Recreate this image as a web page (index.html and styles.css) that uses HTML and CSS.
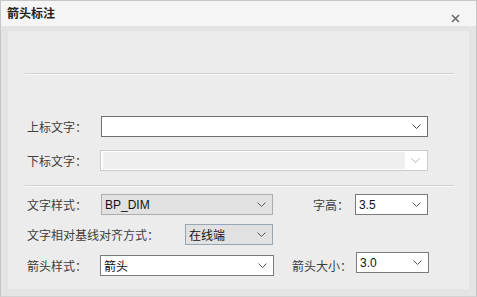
FILE: index.html
```html
<!DOCTYPE html>
<html>
<head>
<meta charset="utf-8">
<link rel="stylesheet" href="styles.css">
</head>
<body>
<div class="window">
  <div class="titlebar">
    <span class="title">箭头标注</span>
    <svg class="close" width="9" height="9" viewBox="0 0 9 9"><path d="M1 1L8 8M8 1L1 8" stroke="#6a6a6a" stroke-width="1.6"/></svg>
  </div>
  <div class="body">
    <div class="panel">
      <div class="sep sep-top"></div>
      <div class="row row1">
        <span class="label lw">上标文字：</span>
        <div class="combo combo-wide focus">
          <span class="value"></span>
          <svg class="chev" width="9" height="5" viewBox="0 0 9 5"><path d="M0.5 0.5L4.5 4.5L8.5 0.5" fill="none" stroke="#444" stroke-width="1"/></svg>
        </div>
      </div>
      <div class="row row2">
        <span class="label lw-narrow">下标文字：</span>
        <div class="combo combo-wide2 disabled">
          <span class="value"></span>
          <span class="btn"><svg class="chev" width="9" height="5" viewBox="0 0 9 5"><path d="M0.5 0.5L4.5 4.5L8.5 0.5" fill="none" stroke="#b5b5b5" stroke-width="1"/></svg></span>
        </div>
      </div>
      <div class="sep sep-mid"></div>
      <div class="row row3">
        <span class="label lw">文字样式：</span>
        <div class="combo combo-style grey">
          <span class="value latin">BP_DIM</span>
          <svg class="chev" width="9" height="5" viewBox="0 0 9 5"><path d="M0.5 0.5L4.5 4.5L8.5 0.5" fill="none" stroke="#555" stroke-width="1"/></svg>
        </div>
        <span class="label l-height">字高：</span>
        <div class="combo combo-small">
          <span class="value latin">3.5</span>
          <svg class="chev" width="9" height="5" viewBox="0 0 9 5"><path d="M0.5 0.5L4.5 4.5L8.5 0.5" fill="none" stroke="#555" stroke-width="1"/></svg>
        </div>
      </div>
      <div class="row row4">
        <span class="label lw-long">文字相对基线对齐方式：</span>
        <div class="combo combo-align grey blue">
          <span class="value">在线端</span>
          <svg class="chev" width="9" height="5" viewBox="0 0 9 5"><path d="M0.5 0.5L4.5 4.5L8.5 0.5" fill="none" stroke="#555" stroke-width="1"/></svg>
        </div>
      </div>
      <div class="row row5">
        <span class="label lw-narrow">箭头样式：</span>
        <div class="combo combo-arrow">
          <span class="value">箭头</span>
          <svg class="chev" width="9" height="5" viewBox="0 0 9 5"><path d="M0.5 0.5L4.5 4.5L8.5 0.5" fill="none" stroke="#555" stroke-width="1"/></svg>
        </div>
        <span class="label l-size">箭头大小：</span>
        <div class="combo combo-small up">
          <span class="value latin">3.0</span>
          <svg class="chev" width="9" height="5" viewBox="0 0 9 5"><path d="M0.5 0.5L4.5 4.5L8.5 0.5" fill="none" stroke="#555" stroke-width="1"/></svg>
        </div>
      </div>
    </div>
  </div>
</div>
</body>
</html>
```

FILE: styles.css
```css
* { box-sizing: border-box; }
html, body { margin: 0; padding: 0; }
body {
  width: 477px;
  height: 297px;
  font-family: "Noto Sans CJK SC", "Noto Sans", sans-serif;
  font-size: 12px;
  color: #3a3a3a;
  background: #e4e4e4;
}
.window {
  width: 477px;
  height: 297px;
  border: 1px solid #c6c6c6;
  border-bottom-color: #d2d2d2;
  background: #e4e4e4;
  display: flex;
  flex-direction: column;
}
.titlebar {
  height: 25px;
  background: #f5f5f5;
  display: flex;
  align-items: center;
  padding-left: 6px;
  padding-right: 16px;
}
.title {
  font-weight: bold;
  font-size: 12px;
  color: #222;
  line-height: 14px;
  margin-top: -2px;
}
.close {
  margin-left: auto;
  margin-top: 10px;
}
.body {
  flex: 1;
  padding: 5px 7px 7px 7px;
  display: flex;
}
.panel {
  flex: 1;
  background: #ececec;
  display: flex;
  flex-direction: column;
  padding-left: 19px;
}
.sep {
  height: 2px;
  border-top: 1px solid #d3d3d3;
  border-bottom: 1px solid #f7f7f7;
  margin-left: -2px;
  margin-right: 15px;
}
.sep-top { margin-top: 42px; }
.sep-mid { margin-top: 14px; }
.row {
  display: flex;
  align-items: center;
  height: 21px;
}
.row1 { margin-top: 41px; }
.row2 { margin-top: 13px; }
.row3 { margin-top: 7px; }
.row4 { margin-top: 9px; }
.row5 { margin-top: 10px; }
.label {
  white-space: nowrap;
  line-height: 14px;
  color: #3e3e3e;
  flex: none;
}
.lw { width: 74px; }
.lw-narrow { width: 73px; }
.lw-long { width: 158px; }
.combo {
  height: 21px;
  border: 1px solid #7a7a7a;
  background: #fff;
  display: flex;
  align-items: center;
  padding-left: 3px;
  padding-right: 6px;
  color: #111;
  flex: none;
}
.combo .value { flex: 1; line-height: 14px; }
.latin { font-family: "Liberation Sans", "Noto Sans", sans-serif; font-size: 12px; }
.combo-wide { width: 327px; }
.combo-wide2 { width: 328px; }
.focus { border-color: #6e6e6e; }
.disabled {
  border-color: #cccccc;
  background: #ffffff;
  padding: 1px 0 1px 2px;
}
.disabled .value {
  align-self: stretch;
  background: #efefef;
}
.disabled .btn {
  width: 20px;
  display: flex;
  align-items: center;
  justify-content: center;
  margin-right: 2px;
}
.grey { background: #e1e1e1; border-color: #adadad; }
.blue { border-color: #97a6b3; }
.combo-style { width: 172px; }
.combo-small { width: 73px; }
.l-height { width: 82px; text-align: right; padding-right: 6px; }
.combo-align { width: 88px; }
.combo-arrow { width: 174px; }
.l-size { margin-left: 18px; width: 64px; }
.up { position: relative; top: -3px; }
```
